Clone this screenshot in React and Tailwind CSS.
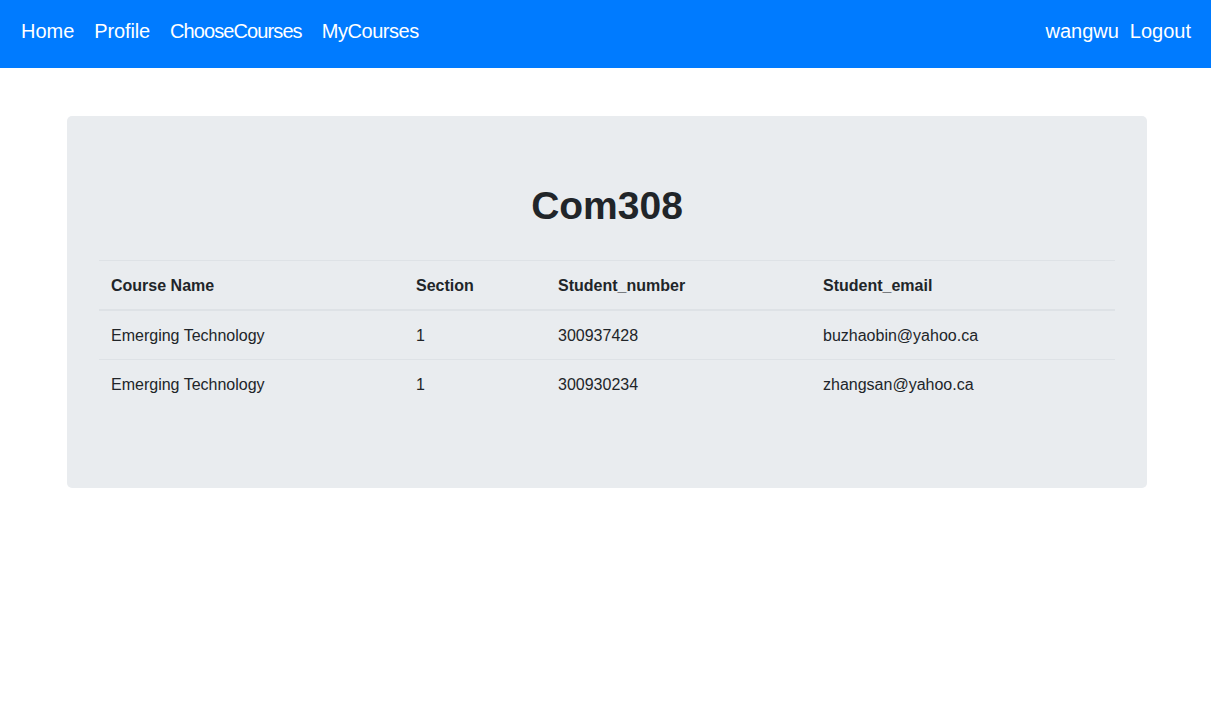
export default function App() {
  const rows = [
    ["Emerging Technology", "1", "300937428", "buzhaobin@yahoo.ca"],
    ["Emerging Technology", "1", "300930234", "zhangsan@yahoo.ca"],
  ];
  const font = { fontFamily: '"Liberation Sans", Arial, sans-serif' };
  return (
    <div className="min-h-[703px] bg-white text-[#212529]" style={font}>
      <nav className="h-[68px] bg-[#007bff] flex items-center justify-between pl-[21px] pr-[20px] pb-[7px] text-white text-[20px]">
        <div className="flex items-center gap-[20px]">
          <span>Home</span>
          <span className="tracking-[-0.15px]">Profile</span>
          <span className="tracking-[-0.9px]">ChooseCourses</span>
          <span className="tracking-[-0.45px]">MyCourses</span>
        </div>
        <div className="flex items-center gap-[11px]">
          <span>wangwu</span>
          <span>Logout</span>
        </div>
      </nav>
      <div className="mt-[48px] ml-[67px] w-[1080px] bg-[#e9ecef] rounded-[5px] px-[32px] pt-[66px] pb-[80px]">
        <h1 className="text-[39px] leading-[48px] font-semibold text-center mb-[30px]">Com308</h1>
        <table className="w-full border-collapse text-[16px]">
          <thead>
            <tr className="border-t border-[#dee2e6] border-b-2">
              <th className="w-[305px] text-left font-bold px-[12px] pt-[13px] pb-[11px] leading-[24px]">Course Name</th>
              <th className="w-[142px] text-left font-bold px-[12px] pt-[13px] pb-[11px] leading-[24px]">Section</th>
              <th className="w-[265px] text-left font-bold px-[12px] pt-[13px] pb-[11px] leading-[24px]">Student_number</th>
              <th className="text-left font-bold px-[12px] pt-[13px] pb-[11px] leading-[24px]">Student_email</th>
            </tr>
          </thead>
          <tbody>
            {rows.map((r, i) => (
              <tr key={i} className={i === 0 ? "" : "border-t border-[#dee2e6]"}>
                {r.map((c, j) => (
                  <td key={j} className="px-[12px] pt-[13px] pb-[11px] leading-[24px]">{c}</td>
                ))}
              </tr>
            ))}
          </tbody>
        </table>
      </div>
    </div>
  );
}
